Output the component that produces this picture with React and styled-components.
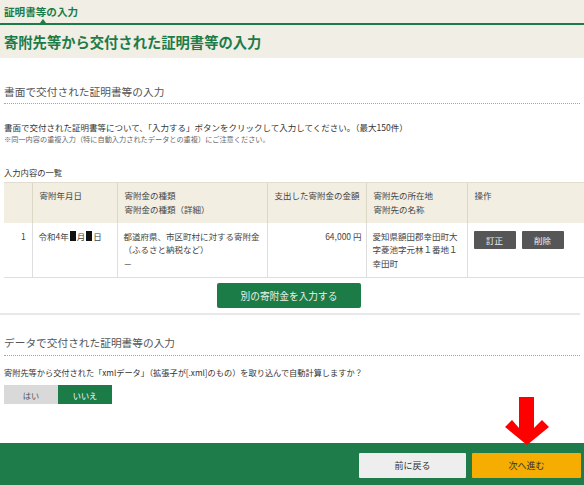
import React from "react";
import styled, { createGlobalStyle } from "styled-components";

const GlobalStyle = createGlobalStyle`
  html, body {
    margin: 0;
    padding: 0;
    background: #fff;
  }
  body {
    font-family: "Noto Sans CJK JP", "Noto Sans", sans-serif;
    color: #333;
  }
`;

const green = "#1c7c48";

/* ---------- page ---------- */
const Page = styled.div`
  min-height: 485px;
  display: flex;
  flex-direction: column;
`;

/* ---------- header ---------- */
const Header = styled.header`
  background: #f1eee5;
  padding-bottom: 6px;
`;

const Crumb = styled.div`
  position: relative;
  padding: 3px 4px 2px;
  font-size: 10.6px;
  line-height: 18px;
  font-weight: 700;
  color: ${green};
  border-bottom: 2px solid ${green};

  &::after {
    content: "";
    position: absolute;
    left: 40px;
    bottom: 0;
    border-left: 3px solid transparent;
    border-right: 3px solid transparent;
    border-bottom: 4px solid ${green};
  }
`;

const Title = styled.h1`
  margin: 7px 0 0;
  padding: 0 4px;
  font-size: 14.3px;
  line-height: 20px;
  font-weight: 700;
  color: ${green};
`;

/* ---------- main ---------- */
const Main = styled.main`
  padding: 0 0 0 4px;
`;

const SectionHeading = styled.h2`
  margin: ${({ top }) => top}px 4px 0 0;
  padding-bottom: ${({ bottom }) => bottom}px;
  font-size: 10.7px;
  line-height: 16px;
  font-weight: 400;
  color: #555;
  border-bottom: 1px dotted #e8a300;
`;

const Lead = styled.p`
  margin: ${({ top }) => top}px 0 0;
  font-size: ${({ size }) => size}px;
  line-height: 12px;
  color: #333;
`;

const Note = styled.p`
  margin: 1px 0 0;
  font-size: 7.2px;
  line-height: 11px;
  color: #666;
`;

const ListLabel = styled.div`
  margin-top: 21px;
  font-size: 8.3px;
  line-height: 12px;
  color: #333;
`;

/* ---------- table ---------- */
const Table = styled.table`
  margin-top: 4px;
  width: 580px;
  border-collapse: collapse;
  table-layout: fixed;
  font-size: 8.5px;
  line-height: 13.5px;
  color: #444;
`;

const Th = styled.th`
  height: 40px;
  box-sizing: border-box;
  padding: 6px 6px 0 7px;
  background: #f2eee2;
  border-top: 1px solid #e2ddd0;
  border-left: ${({ first }) => (first ? "none" : "1px solid #ddd7c6")};
  vertical-align: top;
  text-align: left;
  font-weight: 400;
`;

const Td = styled.td`
  height: 55px;
  box-sizing: border-box;
  padding: 7px ${({ right }) => (right ? "4px" : "6px")} 0 ${({ first }) => (first ? "0" : "6px")};
  border-left: ${({ first }) => (first ? "none" : "1px solid #dedede")};
  border-bottom: 1px solid #dedede;
  vertical-align: top;
  text-align: ${({ right }) => (right ? "right" : "left")};
`;

const Masked = styled.span`
  display: inline-block;
  width: 6px;
  height: 10px;
  margin: 0 1px;
  vertical-align: -1px;
  background: #111;
`;

const OpGroup = styled.div`
  display: flex;
  gap: 6px;
  padding-top: 1px;
`;

const OpButton = styled.button`
  width: 42px;
  height: 18px;
  border: none;
  border-radius: 1px;
  background: #565656;
  color: #eee;
  font-family: inherit;
  font-size: 8.5px;
  padding: 0;
  cursor: pointer;
`;

const AddRow = styled.div`
  display: flex;
  justify-content: center;
  padding-right: 10px;
  margin-top: 5px;
`;

const AddButton = styled.button`
  width: 144px;
  height: 25px;
  border: none;
  border-radius: 2px;
  background: ${green};
  color: #e9f2ec;
  font-family: inherit;
  font-size: 9.7px;
  cursor: pointer;
`;

const Divider = styled.hr`
  margin: 5px 4px 0 -4px;
  border: none;
  height: 2px;
  background: #e8e8e8;
`;

/* ---------- yes / no toggle ---------- */
const Toggle = styled.div`
  display: flex;
  margin-top: 7px;
`;

const ToggleButton = styled.button`
  width: 54px;
  height: 19px;
  border: none;
  padding: 0;
  background: ${({ active }) => (active ? green : "#d9d9d9")};
  color: ${({ active }) => (active ? "#fff" : "#555")};
  font-family: inherit;
  font-size: 8.2px;
  cursor: pointer;
`;

/* ---------- footer ---------- */
const Footer = styled.footer`
  position: relative;
  margin-top: auto;
  height: 42px;
  box-sizing: border-box;
  padding: 10px 3px 0 0;
  background: #1d7c4a;
  display: flex;
  justify-content: flex-end;
  align-items: flex-start;
  gap: 6px;
`;

const NavButton = styled.button`
  width: ${({ w }) => w}px;
  height: 25px;
  border: none;
  border-radius: 1px;
  background: ${({ primary }) => (primary ? "#f4ad00" : "#eeeeee")};
  color: #333;
  font-family: inherit;
  font-size: 9px;
  cursor: pointer;
`;

const Arrow = styled.svg`
  position: absolute;
  right: 34px;
  top: -47px;
`;

const App = () => {
  return (
    <Page>
      <GlobalStyle />
      <Header>
        <Crumb>証明書等の入力</Crumb>
        <Title>寄附先等から交付された証明書等の入力</Title>
      </Header>

      <Main>
        <SectionHeading top={26} bottom={3}>
          書面で交付された証明書等の入力
        </SectionHeading>
        <Lead top={17} size={8.5}>
          書面で交付された証明書等について、「入力する」ボタンをクリックして入力してください。（最大150件）
        </Lead>
        <Note>※同一内容の重複入力（特に自動入力されたデータとの重複）にご注意ください。</Note>

        <ListLabel>入力内容の一覧</ListLabel>
        <Table>
          <colgroup>
            <col style={{ width: 28 }} />
            <col style={{ width: 85 }} />
            <col style={{ width: 150 }} />
            <col style={{ width: 99 }} />
            <col style={{ width: 101 }} />
            <col />
          </colgroup>
          <thead>
            <tr>
              <Th first></Th>
              <Th>寄附年月日</Th>
              <Th>
                寄附金の種類
                <br />
                寄附金の種類（詳細）
              </Th>
              <Th>支出した寄附金の金額</Th>
              <Th>
                寄附先の所在地
                <br />
                寄附先の名称
              </Th>
              <Th>操作</Th>
            </tr>
          </thead>
          <tbody>
            <tr>
              <Td first right>
                1&nbsp;
              </Td>
              <Td>
                令和4年<Masked />月<Masked />日
              </Td>
              <Td>
                <div>都道府県、市区町村に対する寄附金</div>
                <div>（ふるさと納税など）</div>
                <div>－</div>
              </Td>
              <Td right>64,000 円</Td>
              <Td>
                <div>愛知県額田郡幸田町大字菱池字元林１番地１</div>
                <div>幸田町</div>
              </Td>
              <Td>
                <OpGroup>
                  <OpButton>訂正</OpButton>
                  <OpButton>削除</OpButton>
                </OpGroup>
              </Td>
            </tr>
          </tbody>
        </Table>

        <AddRow>
          <AddButton>別の寄附金を入力する</AddButton>
        </AddRow>
        <Divider />

        <SectionHeading top={20} bottom={4}>
          データで交付された証明書等の入力
        </SectionHeading>
        <Lead top={10} size={8.2}>
          寄附先等から交付された「xmlデータ」（拡張子が[.xml]のもの）を取り込んで自動計算しますか？
        </Lead>
        <Toggle>
          <ToggleButton>はい</ToggleButton>
          <ToggleButton active>いいえ</ToggleButton>
        </Toggle>
      </Main>

      <Footer>
        <NavButton w={107}>前に戻る</NavButton>
        <NavButton w={109} primary>
          次へ進む
        </NavButton>
        <Arrow width="46" height="50" viewBox="0 0 46 50">
          <polygon
            points="15,1 30,1 30,32 38,24 45,31 23,49 1,31 8,24 15,32"
            fill="#ff0000"
          />
        </Arrow>
      </Footer>
    </Page>
  );
};

export default App;
